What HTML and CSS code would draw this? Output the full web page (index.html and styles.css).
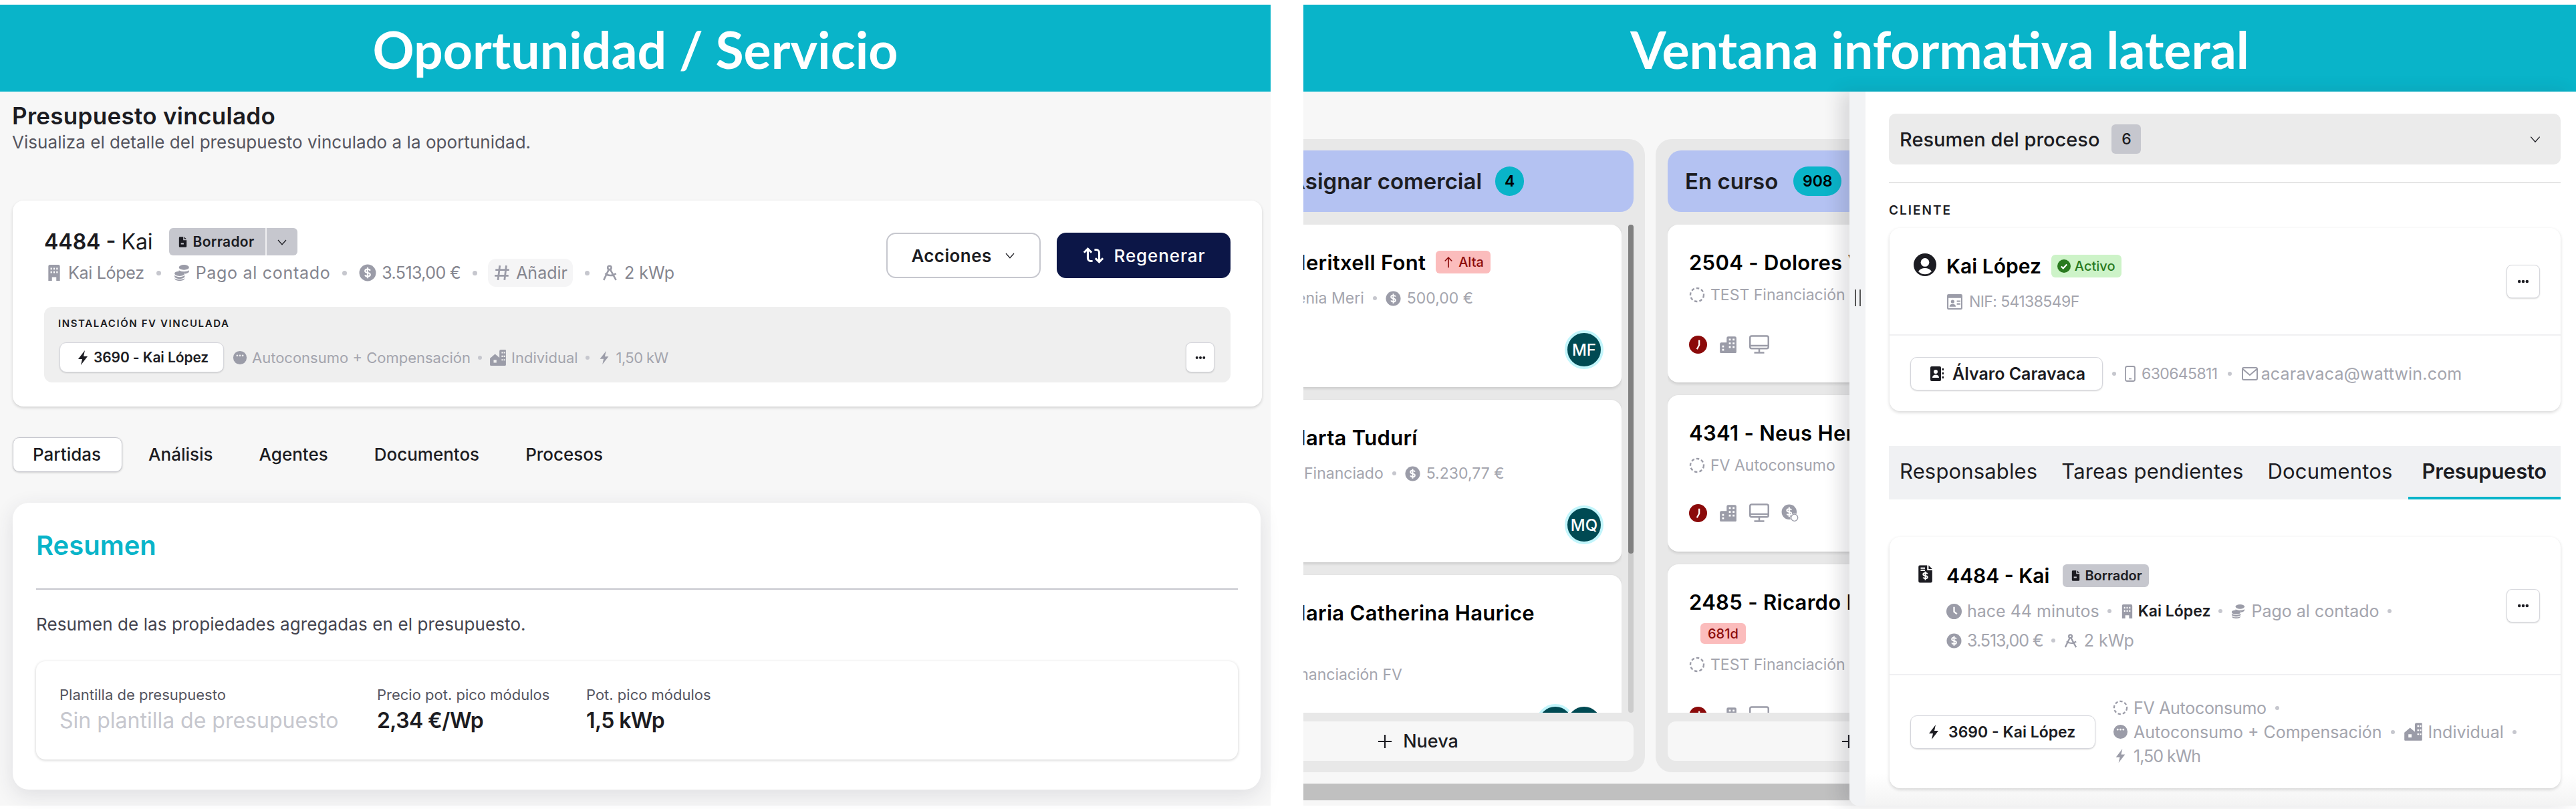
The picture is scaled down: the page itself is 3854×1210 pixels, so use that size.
FILE: index.html
```html
<!DOCTYPE html>
<html lang="es">
  <head>
    <meta charset="UTF-8">
    <title>Oportunidad / Servicio</title>
    <link rel="stylesheet" href="styles.css">
  </head>
  <body>
    <svg class="sprite" xmlns="http://www.w3.org/2000/svg">
      <symbol id="i-file" viewBox="0 0 24 24"><path fill="currentColor" fill-rule="evenodd" d="M6 1h7v7h7v13a2 2 0 0 1-2 2H6a2 2 0 0 1-2-2V3a2 2 0 0 1 2-2zM8 14v3h6v-3zM15 1l5 5h-5z"/></symbol>
      <symbol id="i-chevron" viewBox="0 0 24 24"><path fill="none" stroke="currentColor" stroke-width="1.6" d="M4 8l8 9 8-9"/></symbol>
      <symbol id="i-building" viewBox="0 0 24 24"><path fill="currentColor" fill-rule="evenodd" d="M6 1h12a2 2 0 0 1 2 2v20h-5v-5H9v5H4V3a2 2 0 0 1 2-2zM7 5v2.500h2V5zM11 5v2.500h2V5zM15 5v2.500h2V5zM7 10v2.500h2V10zM11 10v2.500h2V10zM15 10v2.500h2V10z"/></symbol>
      <symbol id="i-office" viewBox="0 0 24 24"><path fill="currentColor" fill-rule="evenodd" d="M10 3a2 2 0 0 1 2-2h9a2 2 0 0 1 2 2v19a1 1 0 0 1-1 1H2a1 1 0 0 1-1-1V11a2 2 0 0 1 2-2h7zM13 4v2.500h2.500V4zM18 4v2.500h2.500V4zM13 9v2.500h2.500V9zM18 9v2.500h2.500V9zM13 14v2.500h2.500V14zM18 14v2.500h2.500V14zM4 13v2.500h2.500V13zM4 17.500V20h2.500v-2.500z"/></symbol>
      <symbol id="i-coins" viewBox="0 0 24 24"><g fill="currentColor"><ellipse cx="15" cy="4.500" rx="7" ry="3.500"/><path d="M8 8.500c1.500 1.200 4 1.800 7 1.800 2.500 0 5-.5 7-1.800v1.500c0 1.500-2 2.800-5 3.300-1-1.600-4-2.800-7-2.800H8z"/><path d="M2 13c0 2 3.500 3.500 7 3.500s7-1.500 7-3.500-3.500-3-7-3-7 1-7 3z"/><path d="M2 15.500c1.500 1.500 4 2.200 7 2.200s5.500-.7 7-2.200V17c0 2-3.500 3.200-7 3.200S2 19 2 17z"/><path d="M2 19.500c1.500 1 4 1.700 7 1.700s5.500-.7 7-1.700c0 2-3.500 3.500-7 3.500s-7-1.500-7-3.500z"/></g></symbol>
      <symbol id="i-dollar" viewBox="0 0 24 24"><circle cx="12" cy="12" r="11.500" fill="currentColor"/><path fill="none" stroke="#fff" stroke-width="2" d="M15.500 9c-.5-1.300-1.700-2-3.500-2-2 0-3.500 1-3.500 2.500s1.500 2.200 3.500 2.500 3.500 1 3.500 2.500S14 17 12 17c-1.800 0-3-.7-3.500-2M12 4.500v15"/></symbol>
      <symbol id="i-hash" viewBox="0 0 24 24"><path fill="none" stroke="currentColor" stroke-width="2.600" d="M9 2 6.500 22M18 2l-2.500 20M3 8h19M2 16h19"/></symbol>
      <symbol id="i-compass" viewBox="0 0 24 24"><g fill="none" stroke="currentColor" stroke-width="2.400"><circle cx="11" cy="5" r="2.500"/><path d="M10 7.500 3 22M12 7.500 20 22M5 13c4 3.500 10 3.500 15 0"/></g></symbol>
      <symbol id="i-bolt" viewBox="0 0 24 24"><path fill="currentColor" d="M15 1 5 14h6l-2 9 10-13h-6z"/></symbol>
      <symbol id="i-chat" viewBox="0 0 24 24"><path fill="currentColor" fill-rule="evenodd" d="M12 1a11 11 0 1 1 0 22 11 11 0 0 1 0-22zM7.500 7a1.500 1.500 0 1 0 0 3 1.500 1.500 0 0 0 0-3zM12 7a1.500 1.500 0 1 0 0 3 1.500 1.500 0 0 0 0-3zM16.500 7a1.500 1.500 0 1 0 0 3 1.500 1.500 0 0 0 0-3z"/></symbol>
      <symbol id="i-home" viewBox="0 0 24 24"><path fill="currentColor" fill-rule="evenodd" d="M14 3a2 2 0 0 1 2-2h6a1 1 0 0 1 1 1v20a1 1 0 0 1-1 1H2a1 1 0 0 1-1-1V13l7-6 6 5zM17 4v2h2V4zM20 4v2h2V4zM17 9v2h2V9zM20 9v2h2V9zM17 14v2h2v-2zM20 14v2h2v-2zM6 15v4h4v-4z"/></symbol>
      <symbol id="i-repeat" viewBox="0 0 24 24"><path fill="none" stroke="currentColor" stroke-width="2.200" d="M6 5v10a3 3 0 0 0 3 3h2M2 9l4-4 4 4M18 19V9a3 3 0 0 0-3-3h-2M14 15l4 4 4-4"/></symbol>
      <symbol id="i-more" viewBox="0 0 24 24"><g fill="currentColor"><circle cx="5" cy="12" r="2.700"/><circle cx="12" cy="12" r="2.700"/><circle cx="19" cy="12" r="2.700"/></g></symbol>
      <symbol id="i-dashed" viewBox="0 0 24 24"><circle cx="12" cy="12" r="10" fill="none" stroke="currentColor" stroke-width="2.400" stroke-dasharray="4.500 3.100"/></symbol>
      <symbol id="i-clock-red" viewBox="0 0 24 24"><circle cx="12" cy="12" r="12" fill="#8b0a0a"/><path fill="none" stroke="#fff" stroke-width="2" d="M13.500 6v6.500L10.500 18"/></symbol>
      <symbol id="i-monitor" viewBox="0 0 24 24"><g fill="none" stroke="currentColor" stroke-width="2"><rect x="1" y="2" width="22" height="15" rx="2"/><path d="M1 13.500h22M12 17v4M6 22h12"/></g></symbol>
      <symbol id="i-dollar-at" viewBox="0 0 24 24"><circle cx="10.500" cy="10.500" r="10" fill="currentColor"/><path fill="none" stroke="#fff" stroke-width="1.800" d="M13.500 8c-.5-1-1.500-1.500-3-1.500-1.700 0-3 .8-3 2s1.300 1.800 3 2 3 .8 3 2-1.300 2-3 2c-1.500 0-2.500-.5-3-1.500M10.500 4v13"/><circle cx="17.500" cy="18" r="5.500" fill="#fff"/><circle cx="17.500" cy="18" r="4.500" fill="none" stroke="currentColor" stroke-width="1.200"/></symbol>
      <symbol id="i-arrow-up" viewBox="0 0 24 24"><path fill="none" stroke="currentColor" stroke-width="2.200" d="M12 23V3M5 10l7-7 7 7"/></symbol>
      <symbol id="i-user" viewBox="0 0 24 24"><circle cx="12" cy="12" r="12" fill="currentColor"/><circle cx="12" cy="9.500" r="4.500" fill="#fff"/><path fill="#fff" d="M5 19c1.500-2.500 4-3.500 7-3.500s5.500 1 7 3.500c-1.800 2-4.300 3-7 3s-5.200-1-7-3z"/></symbol>
      <symbol id="i-check" viewBox="0 0 24 24"><circle cx="12" cy="12" r="12" fill="#2a7a1f"/><path fill="none" stroke="#fff" stroke-width="2.600" d="M7 12.500l3.500 3.500 6.500-7"/></symbol>
      <symbol id="i-idcard" viewBox="0 0 24 24"><path fill="currentColor" fill-rule="evenodd" d="M3 1h18a2 2 0 0 1 2 2v18a2 2 0 0 1-2 2H3a2 2 0 0 1-2-2V3a2 2 0 0 1 2-2zM3 6.500V21h18V6.500zM9 9a2.500 2.500 0 1 0 0 5 2.500 2.500 0 0 0 0-5zM4.500 19c0-3 2-4 4.500-4s4.500 1 4.500 4zM15 10v2h5v-2zM15 14v2h5v-2z"/></symbol>
      <symbol id="i-contact" viewBox="0 0 24 24"><path fill="currentColor" fill-rule="evenodd" d="M5 1h12a2 2 0 0 1 2 2v18a2 2 0 0 1-2 2H5a2 2 0 0 1-2-2V3a2 2 0 0 1 2-2zM11 6a3 3 0 1 0 0 6 3 3 0 0 0 0-6zM6 18h10c0-3-2-4.500-5-4.500S6 15 6 18z"/><path fill="currentColor" d="M20.500 4H23v3h-2.500zM20.500 10H23v3h-2.500zM20.500 16H23v3h-2.500z"/></symbol>
      <symbol id="i-phone" viewBox="0 0 24 24"><g fill="none" stroke="currentColor" stroke-width="1.800"><rect x="5" y="1" width="14" height="22" rx="2.500"/><path d="M10 19.500h4"/></g></symbol>
      <symbol id="i-mail" viewBox="0 0 24 24"><g fill="none" stroke="currentColor" stroke-width="2"><path d="M23 12v7a2 2 0 0 1-2 2H3a2 2 0 0 1-2-2V5a2 2 0 0 1 2-2h18a2 2 0 0 1 2 2v7z"/><path d="M1.500 5 12 14 22.500 5"/></g></symbol>
      <symbol id="i-clock" viewBox="0 0 24 24"><circle cx="12" cy="12" r="12" fill="currentColor"/><path fill="none" stroke="#fff" stroke-width="2.400" d="M12 5v7.500l4.500 3.500"/></symbol>
      <symbol id="i-doc-dollar" viewBox="0 0 24 24"><path fill="currentColor" d="M5 0h10v7h7v15a2 2 0 0 1-2 2H5a2 2 0 0 1-2-2V2a2 2 0 0 1 2-2zM17 0l5 5h-5z"/><path fill="none" stroke="#fff" stroke-width="1.800" d="M15.500 12c-.4-1-1.500-1.400-3-1.400-1.700 0-3 .7-3 1.900s1.300 1.700 3 1.900 3 .7 3 1.900-1.300 1.900-3 1.900c-1.500 0-2.600-.4-3-1.400M12.500 8.500v12M6 4h6M6 7h6"/></symbol>
      <symbol id="i-plus" viewBox="0 0 24 24"><path fill="none" stroke="currentColor" stroke-width="2.400" d="M12 1v22M1 12h22"/></symbol>
    </svg>

    <div class="page">
      <!-- oportunidad -->
      <section class="panel panel-left">
        <div class="banner">Oportunidad / Servicio</div>
        <div class="panel-body">
          <div class="head">
            <h2 class="head-title">Presupuesto vinculado</h2>
            <p class="head-sub">Visualiza el detalle del presupuesto vinculado a la oportunidad.</p>
          </div>

          <div class="budget">
            <div class="budget-top">
              <div>
                <div class="budget-name">
                  <span class="strong">4484 -</span> <span>Kai</span>
                  <div class="status">
                    <span class="status-main"><svg class="ic ic-17"><use href="#i-file"/></svg>Borrador</span>
                    <span class="status-caret"><svg class="ic ic-18"><use href="#i-chevron"/></svg></span>
                  </div>
                </div>
                <div class="meta meta-budget">
                  <span class="item"><svg class="ic"><use href="#i-building"/></svg><span class="ls-slim">Kai López</span></span><i class="sep"></i>
                  <span class="item"><svg class="ic"><use href="#i-coins"/></svg><span class="ls-wide">Pago al contado</span></span><i class="sep"></i>
                  <span class="item"><svg class="ic"><use href="#i-dollar"/></svg><span class="ls-tight">3.513,00 €</span></span><i class="sep"></i>
                  <span class="item add"><svg class="ic"><use href="#i-hash"/></svg>Añadir</span><i class="sep"></i>
                  <span class="item"><svg class="ic"><use href="#i-compass"/></svg>2 kWp</span>
                </div>
              </div>
              <div class="budget-actions">
                <button class="btn btn-light">Acciones<svg class="ic ic-18"><use href="#i-chevron"/></svg></button>
                <button class="btn btn-dark"><svg class="ic ic-34"><use href="#i-repeat"/></svg>Regenerar</button>
              </div>
            </div>
            <div class="linked">
              <div class="linked-label">INSTALACIÓN FV VINCULADA</div>
              <div class="linked-row">
                <span class="chip chip-fv"><svg class="ic ic-24"><use href="#i-bolt"/></svg>3690 - Kai López</span>
                <div class="meta meta-light meta-linked">
                  <span class="item"><svg class="ic ic-22"><use href="#i-chat"/></svg>Autoconsumo + Compensación</span><i class="sep sep-sm"></i>
                  <span class="item"><svg class="ic ic-26"><use href="#i-home"/></svg>Individual</span><i class="sep sep-sm"></i>
                  <span class="item"><svg class="ic ic-22"><use href="#i-bolt"/></svg><span class="ls-tight">1,50 kW</span></span>
                </div>
                <button class="more"><svg class="ic ic-18"><use href="#i-more"/></svg></button>
              </div>
            </div>
          </div>

          <nav class="tabs">
            <span class="tab tab-on">Partidas</span>
            <span class="tab">Análisis</span>
            <span class="tab">Agentes</span>
            <span class="tab">Documentos</span>
            <span class="tab">Procesos</span>
          </nav>

          <div class="summary">
            <h3 class="summary-title">Resumen</h3>
            <p class="summary-text">Resumen de las propiedades agregadas en el presupuesto.</p>
            <div class="props">
              <div class="prop-label">Plantilla de presupuesto</div>
              <div class="prop-label">Precio pot. pico módulos</div>
              <div class="prop-label">Pot. pico módulos</div>
              <div class="prop-value prop-empty">Sin plantilla de presupuesto</div>
              <div class="prop-value">2,34 €/Wp</div>
              <div class="prop-value">1,5 kWp</div>
            </div>
          </div>
        </div>
      </section>

      <!-- ventana lateral -->
      <section class="panel panel-right">
        <div class="banner">Ventana informativa lateral</div>
        <div class="panel-body panel-split">
          <div class="board">
            <div class="board-cols">
              <div class="col col-first">
                <div class="col-head">Asignar comercial<span class="count">4</span></div>
                <div class="col-scroll">
                  <div class="col-cards">
                    <article class="deal">
                      <div class="deal-title">Meritxell Font<span class="tag"><svg class="ic ic-18"><use href="#i-arrow-up"/></svg>Alta</span></div>
                      <div class="meta meta-light deal-meta"><span>Xenia Meri</span><i class="sep sep-sm"></i><span class="item"><svg class="ic ic-23"><use href="#i-dollar"/></svg>500,00 €</span></div>
                      <div class="avatars"><span class="avatar">MF</span></div>
                    </article>
                    <article class="deal">
                      <div class="deal-title">Marta Tudurí</div>
                      <div class="meta meta-light deal-meta deal-meta-in"><span>Financiado</span><i class="sep sep-sm"></i><span class="item"><svg class="ic ic-23"><use href="#i-dollar"/></svg>5.230,77 €</span></div>
                      <div class="avatars"><span class="avatar">MQ</span></div>
                    </article>
                    <article class="deal deal-clip">
                      <div class="deal-title">Maria Catherina Haurice</div>
                      <div class="meta meta-light deal-meta deal-meta-low"><span>Financiación FV</span></div>
                      <div class="avatars avatars-low"><span class="avatar"></span><span class="avatar"></span></div>
                    </article>
                  </div>
                  <div class="vbar"><div class="vbar-thumb"></div></div>
                </div>
                <button class="new new-first"><svg class="ic ic-22"><use href="#i-plus"/></svg>Nueva</button>
              </div>

              <div class="col">
                <div class="col-head col-head-b">En curso<span class="count count-wide">908</span></div>
                <div class="col-cards">
                  <article class="deal deal-b">
                    <div class="deal-title">2504 - Dolores Vidal Ruiz</div>
                    <div class="meta meta-light deal-meta"><span class="item"><svg class="ic ic-24"><use href="#i-dashed"/></svg>TEST Financiación</span></div>
                    <div class="deal-icons">
                      <svg class="ic ic-27"><use href="#i-clock-red"/></svg>
                      <svg class="ic ic-27"><use href="#i-office"/></svg>
                      <svg class="ic ic-30"><use href="#i-monitor"/></svg>
                    </div>
                  </article>
                  <article class="deal deal-b deal-b2">
                    <div class="deal-title">4341 - Neus Hernández Gil</div>
                    <div class="meta meta-light deal-meta"><span class="item"><svg class="ic ic-24"><use href="#i-dashed"/></svg>FV Autoconsumo</span></div>
                    <div class="deal-icons">
                      <svg class="ic ic-27"><use href="#i-clock-red"/></svg>
                      <svg class="ic ic-27"><use href="#i-office"/></svg>
                      <svg class="ic ic-30"><use href="#i-monitor"/></svg>
                      <svg class="ic ic-27"><use href="#i-dollar-at"/></svg>
                    </div>
                  </article>
                  <article class="deal deal-b deal-clip">
                    <div class="deal-title">2485 - Ricardo Martínez</div>
                    <span class="tag tag-days">681d</span>
                    <div class="meta meta-light deal-meta deal-meta-tag"><span class="item"><svg class="ic ic-24"><use href="#i-dashed"/></svg>TEST Financiación</span></div>
                    <div class="deal-icons deal-icons-low">
                      <svg class="ic ic-27"><use href="#i-clock-red"/></svg>
                      <svg class="ic ic-27"><use href="#i-office"/></svg>
                      <svg class="ic ic-30"><use href="#i-monitor"/></svg>
                    </div>
                  </article>
                </div>
                <button class="new new-second"><svg class="ic ic-22"><use href="#i-plus"/></svg>Nueva</button>
              </div>
            </div>
            <div class="hbar"></div>
          </div>

          <aside class="side">
            <div class="side-handle"><span class="grip"></span></div>
            <div class="side-main">
              <div class="accordion">
                <span class="accordion-title">Resumen del proceso</span><span class="accordion-count">6</span>
                <svg class="ic ic-20 accordion-caret"><use href="#i-chevron"/></svg>
              </div>
              <div class="side-rule"></div>
              <div class="side-label">CLIENTE</div>

              <div class="box">
                <div class="box-top box-client">
                  <svg class="ic ic-34 box-icon"><use href="#i-user"/></svg>
                  <div class="box-info">
                    <div class="box-name">Kai López<span class="tag tag-ok"><svg class="ic ic-20"><use href="#i-check"/></svg>Activo</span></div>
                    <div class="meta meta-light box-meta"><span class="item"><svg class="ic ic-25"><use href="#i-idcard"/></svg><span class="ls-tight">NIF: 54138549F</span></span></div>
                  </div>
                  <button class="more more-lg"><svg class="ic ic-20"><use href="#i-more"/></svg></button>
                </div>
                <div class="box-bottom box-contact">
                  <span class="chip chip-contact"><svg class="ic ic-24"><use href="#i-contact"/></svg>Álvaro Caravaca</span>
                  <div class="meta meta-light meta-contact">
                    <i class="sep sep-sm"></i>
                    <span class="item"><svg class="ic ic-24"><use href="#i-phone"/></svg><span class="ls-tight">630645811</span></span><i class="sep sep-sm sep-mail"></i>
                    <span class="item"><svg class="ic ic-24"><use href="#i-mail"/></svg><span class="mail">acaravaca@wattwin.com</span></span>
                  </div>
                </div>
              </div>

              <nav class="side-tabs">
                <span class="side-tab">Responsables</span>
                <span class="side-tab">Tareas pendientes</span>
                <span class="side-tab side-tab-docs">Documentos</span>
                <span class="side-tab side-tab-on">Presupuesto</span>
              </nav>

              <div class="box box-budget">
                <div class="box-top box-top-budget">
                  <svg class="ic ic-33 box-icon-doc"><use href="#i-doc-dollar"/></svg>
                  <div class="box-info box-info-budget">
                    <div class="box-name box-name-budget">4484 - Kai<span class="tag tag-draft"><svg class="ic ic-17"><use href="#i-file"/></svg>Borrador</span></div>
                    <div class="meta meta-light box-meta-row">
                      <span class="item"><svg class="ic ic-23"><use href="#i-clock"/></svg>hace 44 minutos</span><i class="sep sep-sm"></i>
                      <span class="item item-dark"><svg class="ic ic-23"><use href="#i-building"/></svg>Kai López</span><i class="sep sep-sm"></i>
                      <span class="item"><svg class="ic ic-23"><use href="#i-coins"/></svg>Pago al contado</span><i class="sep sep-sm"></i>
                    </div>
                    <div class="meta meta-light box-meta-row box-meta-second">
                      <span class="item"><svg class="ic ic-23"><use href="#i-dollar"/></svg><span class="ls-tighter">3.513,00 €</span></span><i class="sep sep-sm"></i>
                      <span class="item"><svg class="ic ic-23"><use href="#i-compass"/></svg>2 kWp</span>
                    </div>
                  </div>
                  <button class="more more-xl"><svg class="ic ic-20"><use href="#i-more"/></svg></button>
                </div>
                <div class="box-bottom box-install">
                  <span class="chip chip-install"><svg class="ic ic-24"><use href="#i-bolt"/></svg>3690 - Kai López</span>
                  <div class="install-lines">
                    <div class="meta meta-light"><span class="item"><svg class="ic ic-23"><use href="#i-dashed"/></svg><span class="ls-slim">FV Autoconsumo</span></span><i class="sep sep-sm"></i></div>
                    <div class="meta meta-light">
                      <span class="item"><svg class="ic ic-23"><use href="#i-chat"/></svg>Autoconsumo + Compensación</span><i class="sep sep-sm"></i>
                      <span class="item"><svg class="ic ic-29"><use href="#i-home"/></svg>Individual</span><i class="sep sep-sm"></i>
                    </div>
                    <div class="meta meta-light"><span class="item"><svg class="ic ic-23"><use href="#i-bolt"/></svg><span class="ls-tighter">1,50 kWh</span></span></div>
                  </div>
                </div>
              </div>
            </div>
          </aside>
        </div>
      </section>
    </div>
  </body>
</html>
```

FILE: styles.css
```css
* {
  box-sizing: border-box;
}

html, body {
  margin: 0;
  padding: 0;
  background: #fff;
  font-family: 'Inter', 'Liberation Sans', sans-serif;
  color: #1c1c22;
}

.sprite {
  display: none;
}

button {
  font-family: inherit;
  color: inherit;
  cursor: pointer;
}

p, h2, h3 {
  margin: 0;
}

.page {
  display: flex;
  gap: 49px;
  width: 3854px;
  height: 1210px;
  padding-top: 7px;
  overflow: hidden;
}

.panel {
  display: flex;
  flex-direction: column;
  height: 1198px;
}
.panel-left {
  width: 1901px;
}
.panel-right {
  width: 1904px;
}

.banner {
  height: 130px;
  line-height: 132px;
  background: #09b4c9;
  color: #fff;
  text-align: center;
  font-family: 'Lato', sans-serif;
  font-weight: 700;
  font-size: 77px;
}

.panel-body {
  flex: 1;
  background: #f7f7f7;
  min-height: 0;
}
.panel-split {
  display: flex;
}

.ic {
  flex: none;
  width: 26px;
  height: 26px;
  color: #9b9ca8;
}
.ic-17 { width: 17px; height: 24px; }
.ic-18 { width: 18px; height: 18px; }
.ic-20 { width: 20px; height: 20px; }
.ic-22 { width: 22px; height: 22px; }
.ic-23 { width: 23px; height: 23px; }
.ic-24 { width: 24px; height: 24px; }
.ic-25 { width: 25px; height: 25px; }
.ic-26 { width: 26px; height: 26px; }
.ic-27 { width: 27px; height: 27px; }
.ic-29 { width: 29px; height: 29px; }
.ic-30 { width: 30px; height: 30px; }
.ic-33 { width: 26px; height: 33px; }
.ic-34 { width: 34px; height: 34px; }

/* meta rows */
.meta {
  display: flex;
  align-items: center;
  color: #84858f;
  font-size: 25px;
  white-space: nowrap;
}
.meta-light {
  color: #a4a5ae;
  font-size: 23px;
}
.item {
  display: inline-flex;
  align-items: center;
  gap: 9px;
}
.sep {
  flex: none;
  width: 7px;
  height: 7px;
  margin: 0 18px;
  border-radius: 50%;
  background: #c6c7ce;
}
.sep-sm {
  width: 6px;
  height: 6px;
  margin: 0 13px;
}
.ls-wide {
  letter-spacing: .7px;
}
.ls-slim {
  letter-spacing: -.3px;
}
.ls-tight {
  letter-spacing: -.6px;
}
.ls-tighter {
  letter-spacing: -1px;
}

.chip {
  display: inline-flex;
  align-items: center;
  flex: none;
  background: #fff;
  border: 1px solid #d5d6dc;
  border-radius: 10px;
  box-shadow: 0 1px 2px rgba(0, 0, 0, .15);
  color: #1c1c22;
  font-weight: 600;
  white-space: nowrap;
}
.chip .ic {
  color: #1c1c22;
}

.more {
  display: flex;
  align-items: center;
  justify-content: center;
  flex: none;
  width: 43px;
  height: 45px;
  padding: 0;
  background: #fff;
  border: 1px solid #d5d6dc;
  border-radius: 8px;
  box-shadow: 0 1px 2px rgba(0, 0, 0, .15);
}
.more .ic {
  color: #1c1c22;
}
.more-lg, .more-xl {
  width: 50px;
  height: 50px;
  margin-left: auto;
}

/* left panel */
.head {
  padding: 16px 0 0 18px;
}
.head-title {
  font-size: 35px;
  font-weight: 600;
  line-height: 40px;
  letter-spacing: .3px;
}
.head-sub {
  margin-top: 3px;
  font-size: 26px;
  line-height: 34px;
  color: #55555f;
  letter-spacing: .04px;
}

.budget {
  width: 1869px;
  height: 308px;
  margin: 70px 0 0 19px;
  padding: 41px 47px 0;
  background: #fff;
  border-radius: 16px;
  box-shadow: 0 2px 4px rgba(0, 0, 0, .16);
}
.budget-top {
  display: flex;
  justify-content: space-between;
}
.budget-name {
  display: flex;
  align-items: center;
  gap: 8px;
  font-size: 32px;
}
.strong {
  font-weight: 600;
}
.status {
  display: flex;
  margin-left: 16px;
  height: 41px;
  background: #c6c7ce;
  border-radius: 6px;
  font-size: 21px;
  font-weight: 600;
  letter-spacing: .3px;
}
.status .ic {
  color: #1c1c22;
}
.status-main {
  display: flex;
  align-items: center;
  gap: 7px;
  width: 146px;
  padding-left: 12px;
  border-right: 2px solid #f0f0f2;
}
.status-caret {
  display: flex;
  align-items: center;
  justify-content: center;
  width: 46px;
}

.meta-budget {
  margin-top: 5px;
  height: 42px;
  padding-left: 2px;
}
.meta-budget .item {
  gap: 8px;
}
.add {
  height: 42px;
  margin: 0 0 0 -2px;
  padding: 0 8px;
  background: #f5f5f6;
  border-radius: 12px;
}

.budget-actions {
  display: flex;
  gap: 24px;
  margin-top: 7px;
}
.btn {
  display: flex;
  align-items: center;
  justify-content: center;
  height: 68px;
  border-radius: 14px;
  font-size: 26px;
  font-weight: 600;
}
.btn-light {
  width: 231px;
  gap: 18px;
  background: #fff;
  border: 2px solid #c6c7ce;
  letter-spacing: .4px;
}
.btn-light .ic {
  color: #1c1c22;
}
.btn-dark {
  width: 260px;
  gap: 14px;
  background: #0c1647;
  border: none;
  color: #fff;
  font-weight: 500;
  letter-spacing: .9px;
}
.btn-dark .ic {
  color: #fff;
}

.linked {
  height: 113px;
  margin-top: 30px;
  padding: 15px 24px 0 21px;
  background: #efefef;
  border-radius: 12px;
}
.linked-label {
  line-height: 20px;
  font-size: 15px;
  font-weight: 600;
  letter-spacing: 1.6px;
}
.linked-row {
  display: flex;
  align-items: center;
  margin-top: 18px;
  padding-left: 2px;
}
.chip-fv {
  width: 246px;
  height: 45px;
  gap: 4px;
  padding-left: 22px;
  font-size: 21px;
  letter-spacing: -.1px;
  margin-right: 13px;
}
.meta-linked {
  font-size: 22px;
}
.meta-linked .item {
  gap: 7px;
}
.meta-linked .sep {
  margin: 0 11px;
}
.linked-row .more {
  margin-left: auto;
}

.tabs {
  display: flex;
  gap: 9px;
  margin: 46px 0 0 19px;
}
.tab {
  height: 52px;
  line-height: 50px;
  padding: 0 29px;
  border: 1px solid transparent;
  border-radius: 10px;
  font-size: 26px;
  font-weight: 500;
}
.tab-on {
  padding-right: 31px;
  background: #fff;
  border-color: #c6c7ce;
  box-shadow: 0 1px 3px rgba(0, 0, 0, .18);
}

.summary {
  width: 1867px;
  height: 429px;
  margin: 46px 0 0 19px;
  padding: 39px 34px 0 35px;
  background: #fff;
  border-radius: 24px;
  box-shadow: 0 8px 30px rgba(50, 50, 70, .12);
}
.summary-title {
  height: 50px;
  line-height: 50px;
  color: #09b4c9;
  font-size: 40px;
  font-weight: 600;
}
.summary-text {
  margin-top: 39px;
  padding-top: 37px;
  border-top: 2px solid #c6c7ce;
  line-height: 30px;
  font-size: 26px;
  letter-spacing: .1px;
  color: #44444f;
}
.props {
  display: grid;
  grid-template-columns: 475px 313px 1fr;
  grid-template-rows: 32px 46px;
  height: 147px;
  margin-top: 40px;
  padding: 34px 35px 0;
  background: #fff;
  border-radius: 14px;
  box-shadow: 0 1px 4px rgba(0, 0, 0, .2);
}
.prop-label {
  font-size: 22px;
  line-height: 32px;
  color: #55555f;
}
.prop-value {
  font-size: 32px;
  font-weight: 600;
  line-height: 46px;
  letter-spacing: -.6px;
}
.prop-empty {
  color: #c6c7ce;
  font-weight: 400;
  letter-spacing: 0;
}

/* kanban */
.board {
  display: flex;
  flex-direction: column;
  width: 817px;
  flex: none;
  padding-top: 71px;
  overflow: hidden;
}
.board-cols {
  display: flex;
  gap: 16px;
  height: 947px;
}
.col {
  display: flex;
  flex-direction: column;
  flex: none;
  width: 586px;
  padding: 17px 17px 17px 18px;
  background: #e8e8e8;
  border-radius: 24px;
}
.col-first {
  margin-left: -75px;
}
.col-head {
  display: flex;
  align-items: center;
  flex: none;
  height: 92px;
  padding-left: 36px;
  background: #b4c2f2;
  border-radius: 20px;
  font-size: 33px;
  font-weight: 600;
  white-space: nowrap;
}
.col-head-b {
  padding-left: 26px;
}
.count {
  display: flex;
  align-items: center;
  justify-content: center;
  width: 43px;
  height: 44px;
  margin-left: 20px;
  background: #09b4c9;
  border-radius: 22px;
  font-size: 23px;
  font-weight: 600;
  color: #000;
}
.count-wide {
  width: 72px;
  margin-left: 23px;
}
.col-scroll {
  display: flex;
  gap: 10px;
  height: 730px;
  margin-top: 19px;
  flex: none;
}
.col-scroll .col-cards {
  margin-top: 0;
  flex: 1;
}
.col-cards {
  display: flex;
  flex-direction: column;
  gap: 19px;
  height: 730px;
  margin-top: 19px;
  flex: none;
  overflow: hidden;
}
.vbar {
  width: 8px;
  flex: none;
  background: #ccc;
  border-radius: 4px;
}
.vbar-thumb {
  height: 492px;
  background: #808080;
  border-radius: 4px;
}

.deal {
  flex: none;
  height: 243px;
  padding: 36px 0 0 32px;
  background: #fff;
  border-radius: 16px;
  box-shadow: 0 2px 4px rgba(0, 0, 0, .14);
  overflow: hidden;
}
.deal-clip {
  height: 300px;
}
.deal-title {
  display: flex;
  align-items: center;
  height: 40px;
  font-size: 31px;
  font-weight: 600;
  letter-spacing: .3px;
  color: #000;
  white-space: nowrap;
}
.deal-meta {
  height: 30px;
  margin-top: 19px;
}
.deal-meta-in {
  padding-left: 26px;
}
.deal-meta-low {
  margin-top: 58px;
}
.avatars {
  display: flex;
  justify-content: flex-end;
  margin: 33px 27px 0 0;
}
.avatars-low {
  margin-top: 29px;
}
.avatar {
  display: flex;
  align-items: center;
  justify-content: center;
  width: 58px;
  height: 58px;
  background: #004a53;
  border: 4px solid #c2f5fb;
  border-radius: 50%;
  color: #fff;
  font-size: 24px;
  font-weight: 500;
}
.avatar + .avatar {
  margin-left: -15px;
  border-color: #fff;
}
.tag {
  display: inline-flex;
  align-items: center;
  gap: 6px;
  height: 34px;
  margin-left: 15px;
  padding: 0 10px;
  background: #fbbcbc;
  border-radius: 6px;
  color: #8b0a0a;
  font-size: 20px;
  font-weight: 500;
  letter-spacing: 0;
}
.tag .ic {
  color: #8b0a0a;
}
.tag-days {
  height: 31px;
  margin: 12px 0 0 17px;
  padding: 0 11px;
}
.deal-b {
  height: 236px;
}
.deal-b2 {
  height: 234px;
}
.deal-b.deal-clip {
  height: 300px;
}
.deal-b .deal-meta {
  height: 30px;
  margin-top: 14px;
}
.deal-b .item {
  gap: 8px;
}
.deal-b .deal-meta-tag {
  margin-top: 16px;
}
.deal-icons {
  display: flex;
  align-items: center;
  gap: 18px;
  margin-top: 44px;
}
.deal-b2 .deal-icons {
  margin-top: 41px;
}
.deal-icons-low {
  margin-top: 46px;
}

.new {
  display: flex;
  align-items: center;
  justify-content: center;
  gap: 16px;
  flex: none;
  height: 59px;
  margin-top: 13px;
  background: #f7f7f7;
  border: none;
  border-radius: 12px;
  font-size: 27px;
  font-weight: 500;
}
.new .ic {
  color: #1c1c22;
}
.new-first {
  padding-right: 100px;
}
.new-second {
  justify-content: flex-start;
  padding-left: 260px;
}
.hbar {
  height: 25px;
  margin-top: 17px;
  background: #c0c0c0;
}

/* side window */
.side {
  display: flex;
  flex: 1;
  min-width: 0;
  position: relative;
  border-bottom-left-radius: 14px;
  box-shadow: -14px 0 26px rgba(40, 40, 60, .14);
}
.side-handle {
  display: flex;
  flex: none;
  justify-content: center;
  width: 24px;
  padding-top: 296px;
  background: #f2f3f5;
  border-bottom-left-radius: 14px;
}
.grip {
  width: 9px;
  height: 25px;
  border-left: 2px solid #555;
  border-right: 2px solid #555;
}
.side-main {
  flex: 1;
  min-width: 0;
  padding: 33px 23px 0 35px;
  background: linear-gradient(#fff 1020px, #f3f3f3);
}
.accordion {
  display: flex;
  align-items: center;
  height: 76px;
  padding: 0 28px 0 16px;
  background: #ebebeb;
  border-radius: 10px;
  font-size: 29px;
  font-weight: 500;
}
.accordion-count {
  display: flex;
  align-items: center;
  justify-content: center;
  width: 44px;
  height: 44px;
  margin-left: 18px;
  background: #c6c7ce;
  border-radius: 6px;
  font-size: 23px;
  font-weight: 500;
}
.accordion-caret {
  margin-left: auto;
  color: #1c1c22;
}
.side-rule {
  height: 2px;
  margin-top: 26px;
  background: #e5e5e5;
}
.side-label {
  margin-top: 29px;
  line-height: 24px;
  font-size: 19px;
  font-weight: 600;
  letter-spacing: 2px;
}

.box {
  height: 274px;
  margin: 14px 0 0 1px;
  background: #fff;
  border-radius: 16px;
  box-shadow: 0 2px 5px rgba(0, 0, 0, .16);
}
.box-top {
  display: flex;
  align-items: center;
  border-bottom: 2px solid #f0f0f2;
  padding-right: 31px;
}
.box-client {
  height: 161px;
  padding-left: 36px;
}
.box-icon {
  align-self: flex-start;
  margin-top: 38px;
  color: #1c1c22;
}
.box-info {
  align-self: flex-start;
  margin-left: 15px;
}
.box-info-budget {
  margin-left: 19px;
}
.box-name {
  display: flex;
  align-items: center;
  height: 34px;
  margin-top: 40px;
  font-size: 30px;
  font-weight: 600;
  color: #000;
}
.tag-ok {
  height: 34px;
  padding: 0 10px 0 9px;
  background: #cdf3c8;
  color: #2a7a1f;
  font-size: 20px;
}
.box-meta {
  height: 30px;
  margin-top: 21px;
}
.box-bottom {
  display: flex;
  align-items: center;
}
.box-contact {
  height: 113px;
  padding-left: 31px;
}
.chip-contact {
  width: 288px;
  height: 50px;
  gap: 12px;
  padding-left: 26px;
  font-size: 25px;
}
.meta-contact .item {
  gap: 5px;
}
.meta-contact .sep {
  margin: 0 9px 0 14px;
}
.meta-contact .sep-mail {
  margin: 0 15px;
}
.mail {
  font-size: 25px;
  letter-spacing: .2px;
}

.side-tabs {
  display: flex;
  height: 80px;
  margin-top: 52px;
  background: #f0f1f3;
  padding-left: 16px;
}
.side-tab {
  height: 80px;
  line-height: 76px;
  margin-right: 36px;
  font-size: 31px;
  letter-spacing: .15px;
  white-space: nowrap;
}
.side-tab-docs {
  margin-right: 0;
}
.side-tab-on {
  margin: 0 0 0 auto;
  padding: 0 21px;
  border-bottom: 4px solid #09b4c9;
  font-weight: 600;
  letter-spacing: -.25px;
}

.box-budget {
  height: 376px;
  margin-top: 56px;
}
.box-top-budget {
  height: 207px;
  padding-left: 40px;
}
.box-icon-doc {
  align-self: flex-start;
  margin-top: 39px;
  color: #1c1c22;
}
.box-name-budget {
  margin-top: 41px;
}
.tag-draft {
  gap: 5px;
  margin-left: 20px;
  padding: 0 10px 0 11px;
  background: #c6c7ce;
  color: #1c1c22;
  font-weight: 600;
  font-size: 20px;
}
.tag-draft .ic {
  color: #1c1c22;
}
.box-meta-row {
  height: 30px;
  margin-top: 21px;
  font-size: 25px;
}
.box-meta-row .item {
  gap: 8px;
}
.box-meta-row .sep {
  margin: 0 12px;
}
.box-meta-second {
  margin-top: 14px;
}
.box-meta-row .item-dark {
  gap: 5px;
  color: #1c1c22;
  font-weight: 600;
  font-size: 23px;
}
.box-install {
  height: 169px;
  padding-left: 31px;
  gap: 26px;
}
.chip-install {
  width: 277px;
  height: 50px;
  gap: 10px;
  padding-left: 22px;
  font-size: 23px;
}
.install-lines {
  display: flex;
  flex-direction: column;
  gap: 6px;
}
.install-lines .meta {
  height: 30px;
  font-size: 25px;
}
.install-lines .item {
  gap: 8px;
}
```
